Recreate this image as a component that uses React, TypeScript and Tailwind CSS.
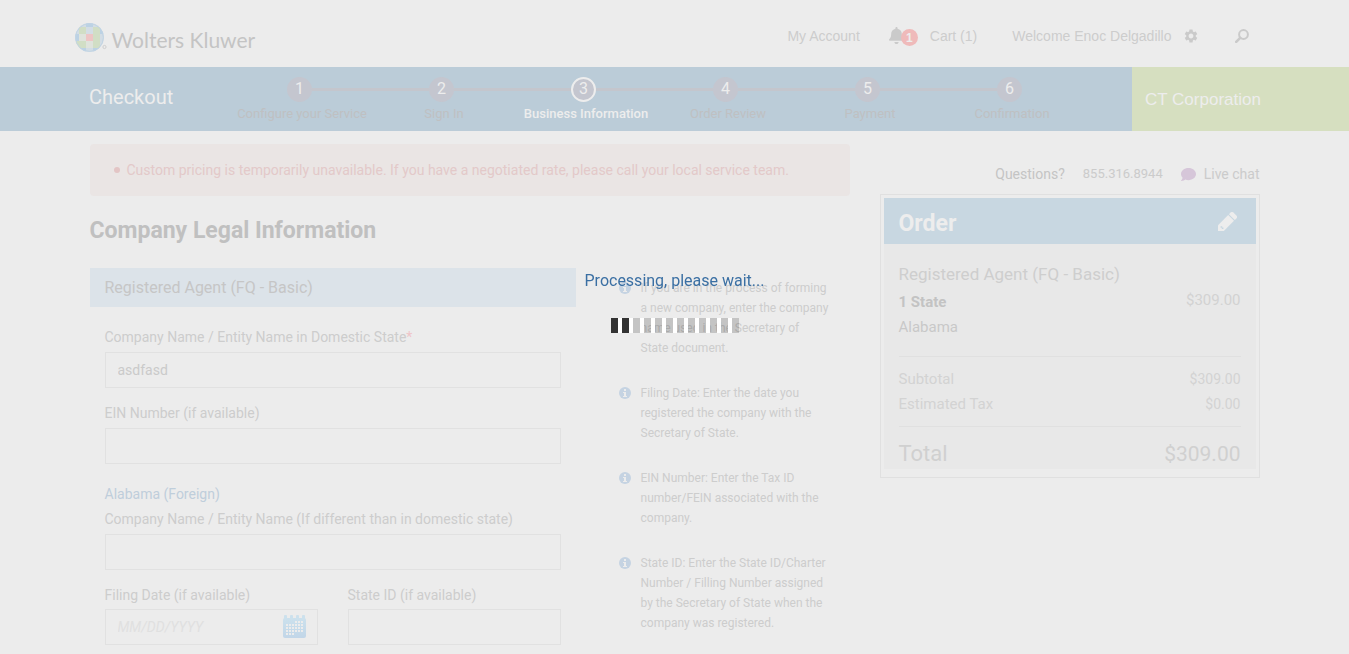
import { FaBell, FaComment } from "react-icons/fa";
import { MdSettings } from "react-icons/md";

const steps = [
  "Configure your Service",
  "Sign In",
  "Business Information",
  "Order Review",
  "Payment",
  "Confirmation",
];
const current = 2;

const tips = [
  "If you are in the process of forming a new company, enter the company name used in the Secretary of State document.",
  "Filing Date: Enter the date you registered the company with the Secretary of State.",
  "EIN Number: Enter the Tax ID number/FEIN associated with the company.",
  "State ID: Enter the State ID/Charter Number / Filling Number assigned by the Secretary of State when the company was registered.",
];

function Logo() {
  const b = "#bcd2e4";
  const p = "#d3dde5";
  const g = "#d1dec5";
  const l = "#dfe3dc";
  const r = "#edc5c5";
  const rows = [
    [p, p, b, p, p],
    [p, g, p, g, b],
    [b, l, r, g, p],
    [g, g, l, g, p],
    [b, b, p, b, b],
  ];
  const at = [0, 4, 11, 18, 25];
  const size = [4, 7, 7, 7, 4];
  return (
    <svg viewBox="0 0 32 29" className="h-[29px] w-8" aria-hidden="true">
      <clipPath id="globe">
        <circle cx="14.5" cy="14.5" r="14.4" />
      </clipPath>
      <g clipPath="url(#globe)">
        {rows.map((row, y) =>
          row.map((c, x) => (
            <rect key={`${x}-${y}`} x={at[x]} y={at[y]} width={size[x]} height={size[y]} fill={c} />
          )),
        )}
      </g>
      <circle cx="14.5" cy="14.5" r="13.9" fill="none" stroke="#c0d4e4" strokeWidth="1" />
      <circle cx="29.5" cy="24" r="1.6" fill="none" stroke="#cfcfcf" strokeWidth="1" />
    </svg>
  );
}

function SearchIcon() {
  return (
    <svg viewBox="0 0 14 14" className="size-[14px]" fill="none" stroke="#cacaca" aria-hidden="true">
      <circle cx="8.5" cy="5.5" r="4.4" strokeWidth="2" />
      <path d="M5.2 8.8 1.2 12.8" strokeWidth="2.6" strokeLinecap="round" />
    </svg>
  );
}

function InfoIcon() {
  return (
    <svg viewBox="0 0 12 12" className="mt-1 size-3 shrink-0" aria-hidden="true">
      <circle cx="6" cy="6" r="6" fill="#c5d3e2" />
      <path d="M5 2h2v2H5ZM4 5h3v4h1v1H4V9h1V6H4Z" fill="#ececec" />
    </svg>
  );
}

function PencilIcon() {
  return (
    <svg viewBox="0 0 19 19" className="size-[19px]" fill="#ededed" aria-hidden="true">
      <path d="M0 19V13.2L10.2 3l5.8 5.8L5.8 19Z" />
      <path d="M11 2.2 12.6.6a2 2 0 0 1 2.8 0l3 3a2 2 0 0 1 0 2.8L16.8 8Z" />
      <path d="M2.6 14.3h1.6v1.2h1.2v1.4H3.8v-1.2H2.6Z" fill="#c8d7e1" />
    </svg>
  );
}

function CalendarIcon() {
  const cells = [];
  for (let y = 0; y < 5; y++)
    for (let x = 0; x < 6; x++) {
      if (y === 0 && x < 3) continue;
      if (y === 4 && x > 2) continue;
      cells.push(<rect key={`${x}-${y}`} x={3 + x * 3} y={6 + y * 3} width="2" height="2" fill="#ececec" />);
    }
  return (
    <svg viewBox="0 0 23 23" className="h-[23px] w-[23px]" aria-hidden="true">
      <defs>
        <linearGradient id="cal" x1="0" y1="0" x2="0" y2="1">
          <stop offset="0" stopColor="#cce1ed" />
          <stop offset="1" stopColor="#c2d6e8" />
        </linearGradient>
      </defs>
      <rect y="3" width="23" height="20" rx="2" fill="url(#cal)" />
      {[1, 7, 13, 19].map((x) => (
        <rect key={x} x={x} y="0" width="3" height="5" rx="1" fill="#cce1ed" />
      ))}
      {cells}
    </svg>
  );
}

const labelClass = "block text-sm leading-5 text-[#cdcdcd]";
const inputClass =
  "block h-9 w-full border border-[#e1e1e1] bg-transparent px-3 text-sm text-[#cacaca] outline-none placeholder:italic placeholder:text-[#e0e0e0]";

function Field({ id, label, required, value }: { id: string; label: string; required?: boolean; value?: string }) {
  return (
    <div>
      <label htmlFor={id} className={labelClass}>
        {label}
        {required && <span className="text-[#efc4c8]">*</span>}
      </label>
      <input id={id} type="text" defaultValue={value} className={`mt-[5px] ${inputClass}`} />
    </div>
  );
}

function Header() {
  return (
    <header className="mx-auto flex h-[67px] w-full max-w-[1200px] items-center justify-between pr-[26px] pt-1">
      <a href="#home" className="flex items-center gap-[5px] pt-1 font-[Lato] text-[21px] text-[#c4c4c4]">
        <Logo />
        <span className="pt-1">Wolters Kluwer</span>
      </a>
      <nav className="flex items-center font-['Liberation_Sans'] text-sm text-[#cdcdcd]">
        <a href="#account">My Account</a>
        <a href="#alerts" aria-label="Notifications" className="ml-7 flex items-center">
          <FaBell className="size-[17px] text-[#cacaca]" />
          <span className="-ml-1 mt-1 flex size-[17px] items-center justify-center rounded-full bg-[#efbaba] text-xs font-bold text-[#ededed]">
            1
          </span>
        </a>
        <a href="#cart" className="ml-3">Cart (1)</a>
        <a href="#profile" className="ml-[35px] flex items-center gap-[11px]">
          Welcome Enoc Delgadillo
          <MdSettings className="size-4 text-[#cacaca]" />
        </a>
        <button type="button" aria-label="Search" className="ml-9">
          <SearchIcon />
        </button>
      </nav>
    </header>
  );
}

function Progress() {
  return (
    <div className="flex h-16 bg-[#bbccd8]">
      <div className="flex flex-1 pl-[89px]">
        <h1 className="w-[142px] shrink-0 pt-4 text-xl leading-7 text-[#ededed]">Checkout</h1>
        <ol className="flex pt-[10px]">
          {steps.map((s, i) => (
            <li key={s} className="w-[142px]">
              <div className="-ml-[5px] flex items-center">
                <span className={`h-[3px] flex-1 ${i === 0 ? "" : "bg-[#c4c6cd]"}`} />
                <span
                  className={`flex size-[25px] items-center justify-center rounded-full bg-[#c4c6cf] pb-px text-base text-[#ededed] ${
                    i === current ? "border-2 border-[#ededed]" : ""
                  }`}
                >
                  {i + 1}
                </span>
                <span className={`h-[3px] flex-1 ${i === steps.length - 1 ? "" : "bg-[#c4c6cd]"}`} />
              </div>
              <div
                className={`whitespace-nowrap text-center text-[13px] leading-6 ${
                  i === current ? "font-medium text-[#ededed]" : "text-[#bfc0c2]"
                }`}
              >
                {s}
              </div>
            </li>
          ))}
        </ol>
      </div>
      <div className="flex w-[217px] items-center bg-[#d6dfc0] pl-[13px] pt-px font-['Liberation_Sans'] text-[17px] text-[#ededed]">
        CT Corporation
      </div>
    </div>
  );
}

function Order() {
  return (
    <section className="border border-[#e0e0e0] px-[3px] pt-[3px] pb-2">
      <div className="flex h-[46px] items-center justify-between bg-[#c8d7e1] pl-[15px] pr-[19px]">
        <h2 className="pt-[6px] text-[23px] leading-8 font-bold text-[#ededed]">Order</h2>
        <button type="button" aria-label="Edit order">
          <PencilIcon />
        </button>
      </div>
      <div className="bg-[#e8e8e8] px-[15px] text-[#cecece]">
        <h3 className="pt-[18px] text-[17px] leading-6">Registered Agent (FQ - Basic)</h3>
        <div className="flex justify-between pt-1">
          <div className="text-[15px] leading-[25px] text-[#c8c8c8]">
            <div className="font-bold text-[#c3c3c3]">1 State</div>
            <div>Alabama</div>
          </div>
          <div className="text-[15px] leading-5 text-[#d2d2d2]">$309.00</div>
        </div>
        <dl className="mt-4 grid grid-cols-2 border-y border-[#e0e0e0] pt-[10px] pb-[9px] text-[15px] leading-[25px] text-[#d3d3d3]">
          <dt>Subtotal</dt>
          <dd className="text-right text-sm leading-[25px]">$309.00</dd>
          <dt>Estimated Tax</dt>
          <dd className="text-right text-sm leading-[25px]">$0.00</dd>
        </dl>
        <div className="flex justify-between pt-3 text-[22px] leading-[30px] text-[#d0d0d0]">
          <span>Total</span>
          <span className="text-[21px]">$309.00</span>
        </div>
      </div>
    </section>
  );
}

function Processing() {
  return (
    <div role="status" className="fixed inset-x-0 top-[269px] flex flex-col items-center">
      <p className="text-base leading-6 text-[#3a6fa3]">Processing, please wait...</p>
      <div className="mt-[25px] flex h-[15px]">
        {Array.from({ length: 12 }, (_, i) => (
          <span
            key={i}
            className={`w-[11px] border-r-4 border-white bg-clip-padding last:w-[7px] last:border-r-0 ${
              i < 2 ? "bg-[#333333]" : "bg-black/17"
            }`}
          />
        ))}
      </div>
    </div>
  );
}

export default function App() {
  return (
    <div className="min-h-screen overflow-x-hidden bg-[#ececec] font-['Roboto',sans-serif]">
      <Header />
      <Progress />
      <main className="mx-auto flex max-w-[1170px] items-start gap-[30px] pt-[13px]">
        <div className="min-w-0 flex-1">
          <ul className="rounded bg-[#eae5e4] px-6 py-4 text-sm leading-5 text-[#e3c9c9]">
            <li className="flex items-center gap-[7px]">
              <span className="size-[6px] rounded-full bg-[#e3c5c5]" />
              Custom pricing is temporarily unavailable. If you have a negotiated rate, please call your local service team.
            </li>
          </ul>
          <h2 className="mt-[19px] text-[23px] font-bold leading-8 text-[#c0c0c0]">Company Legal Information</h2>
          <div className="mt-[21px] flex">
            <form className="w-[486px]">
              <h3 className="bg-[#dce3e9] pl-[15px] text-base leading-[39px] text-[#c6c6c6]">Registered Agent (FQ - Basic)</h3>
              <div className="flex flex-col gap-[15px] px-[15px] pt-5">
                <Field id="company" label="Company Name / Entity Name in Domestic State" required value="asdfasd" />
                <Field id="ein" label="EIN Number (if available)" />
                <div className="pt-[5px]">
                  <p className="mb-[5px] text-sm leading-5 text-[#bfcedb]">Alabama (Foreign)</p>
                  <Field id="foreign" label="Company Name / Entity Name (If different than in domestic state)" />
                </div>
                <div className="grid grid-cols-2 gap-[30px]">
                  <div>
                    <label htmlFor="filing" className={labelClass}>Filing Date (if available)</label>
                    <div className="relative mt-1">
                      <input id="filing" type="text" placeholder="MM/DD/YYYY" className={inputClass} />
                      <button type="button" aria-label="Pick a date" className="absolute right-3 top-[6px]">
                        <CalendarIcon />
                      </button>
                    </div>
                  </div>
                  <div>
                    <label htmlFor="state-id" className={labelClass}>State ID (if available)</label>
                    <input id="state-id" type="text" className={`mt-1 ${inputClass}`} />
                  </div>
                </div>
              </div>
            </form>
            <ul className="ml-[43px] mt-[10px] flex w-[211px] flex-col gap-[25px] text-xs leading-5 text-[#cdcdcd]">
              {tips.map((t) => (
                <li key={t} className="flex gap-[10px]">
                  <InfoIcon />
                  <span>{t}</span>
                </li>
              ))}
            </ul>
          </div>
        </div>
        <aside className="w-[380px]">
          <div className="flex justify-end pb-[10px] pt-5 text-sm leading-5 text-[#cbcbcb]">
            <span className="text-[#c4c4c4]">Questions?</span>
            <a href="tel:8553168944" className="ml-[18px] text-[13px]">855.316.8944</a>
            <a href="#chat" className="ml-[18px] flex items-center gap-2">
              <FaComment className="size-[15px] text-[#d6c6d9]" />
              Live chat
            </a>
          </div>
          <Order />
        </aside>
      </main>
      <Processing />
    </div>
  );
}
